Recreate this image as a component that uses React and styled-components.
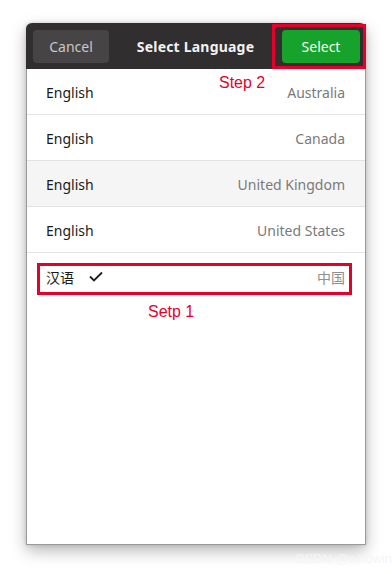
import React from 'react';
import styled, { createGlobalStyle } from 'styled-components';

const Global = createGlobalStyle`
  body {
    margin: 0;
    background: #ffffff;
    font-family: "Noto Sans", "Noto Sans CJK SC", sans-serif;
  }
`;

const Page = styled.div`
  position: relative;
  width: 392px;
  height: 574px;
  padding: 23px 0 0 26px;
  box-sizing: border-box;
`;

const Window = styled.div`
  position: relative;
  width: 340px;
  height: 522px;
  background: #ffffff;
  border-radius: 6px 6px 0 0;
  border: 1px solid #9a9a9a;
  border-top: none;
  box-sizing: border-box;
  box-shadow: 0 6px 16px rgba(0, 0, 0, 0.28), 0 0 4px rgba(0, 0, 0, 0.15);
  display: flex;
  flex-direction: column;
`;

const HeaderBar = styled.div`
  height: 46px;
  background: #302e2e;
  border-radius: 6px 6px 0 0;
  display: flex;
  align-items: center;
  padding: 0 6px 0 7px;
  margin: 0 -1px;
  flex-shrink: 0;
`;

const Button = styled.button`
  height: 33px;
  width: ${p => p.$w}px;
  border: none;
  border-radius: 4px;
  font-family: "Noto Sans", sans-serif;
  font-size: 14px;
  color: ${p => (p.$primary ? '#f4fff2' : '#c9c7c7')};
  background: ${p => (p.$primary ? '#17a22c' : '#464444')};
  padding: 0;
`;

const Title = styled.div`
  flex: 1;
  text-align: center;
  color: #f2f2f2;
  font-weight: 700;
  font-size: 14px;
  letter-spacing: 0.2px;
`;

const List = styled.div`
  display: flex;
  flex-direction: column;
`;

const Row = styled.div`
  height: 46px;
  display: flex;
  align-items: center;
  justify-content: space-between;
  padding: 2px 20px 0 19px;
  background: ${p => (p.$hover ? '#f5f5f5' : '#ffffff')};
  border-bottom: 1px solid ${p => (p.$last ? 'transparent' : '#e3e3e3')};
  box-sizing: border-box;
`;

const Lang = styled.div`
  display: flex;
  align-items: center;
  gap: 15px;
  font-size: 14px;
  color: #1a1a1a;
`;

const Region = styled.span`
  font-size: 14px;
  color: ${p => (p.$light ? '#8f8f8f' : '#7a7a7a')};
`;

const Mark = styled.div`
  position: absolute;
  left: ${p => p.$x}px;
  top: ${p => p.$y}px;
  width: ${p => p.$w}px;
  height: ${p => p.$h}px;
  border: 3px solid #e5002b;
  box-sizing: border-box;
  pointer-events: none;
`;

const Note = styled.div`
  position: absolute;
  left: ${p => p.$x}px;
  top: ${p => p.$y}px;
  font-family: "Liberation Sans", Arial, sans-serif;
  font-size: 16px;
  color: #e5002b;
`;

const Watermark = styled.div`
  position: absolute;
  left: 295px;
  top: 551px;
  font-family: "Liberation Sans", Arial, sans-serif;
  font-size: 13px;
  color: #f5f5f5;
`;

const Check = () => (
  <svg width="14" height="11" viewBox="0 0 14 11" fill="none">
    <path d="M1 5.5 L5 9.5 L13 1.5" stroke="#1f1f1f" strokeWidth="1.8" />
  </svg>
);

const rows = [
  { lang: 'English', region: 'Australia' },
  { lang: 'English', region: 'Canada' },
  { lang: 'English', region: 'United Kingdom', hover: true },
  { lang: 'English', region: 'United States' },
];

export default function App() {
  return (
    <>
      <Global />
      <Page>
        <Window>
          <HeaderBar>
            <Button $w={76}>Cancel</Button>
            <Title>Select Language</Title>
            <Button $w={78} $primary>Select</Button>
          </HeaderBar>
          <List>
            {rows.map(r => (
              <Row key={r.region} $hover={r.hover}>
                <Lang>{r.lang}</Lang>
                <Region>{r.region}</Region>
              </Row>
            ))}
            <Row $last>
              <Lang>
                汉语
                <Check />
              </Lang>
              <Region $light>中国</Region>
            </Row>
          </List>
        </Window>
        <Mark $x={272} $y={24} $w={94} $h={45} />
        <Note $x={219} $y={74}>Step 2</Note>
        <Mark $x={37} $y={263} $w={315} $h={32} />
        <Note $x={148} $y={303}>Setp 1</Note>
        <Watermark>CSDN @whowin</Watermark>
      </Page>
    </>
  );
}
